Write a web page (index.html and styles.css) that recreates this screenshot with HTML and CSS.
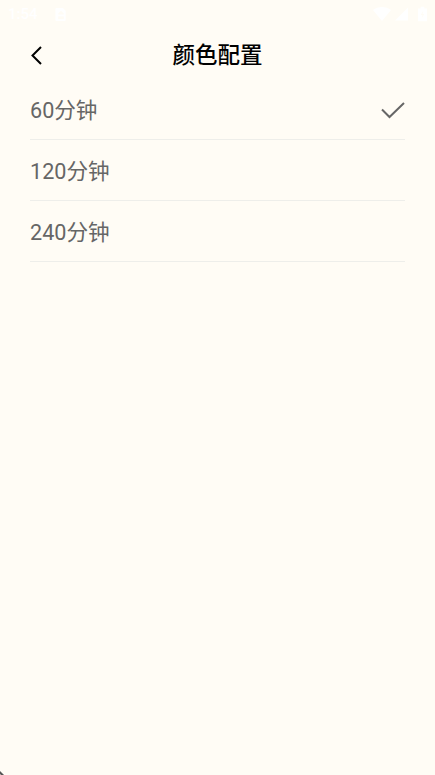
FILE: index.html
```html
<!DOCTYPE html>
<html lang="zh">
<head>
<meta charset="utf-8">
<title>颜色配置</title>
<link rel="stylesheet" href="styles.css">
</head>
<body>
<div class="page">
  <div class="status">
    <div class="status-left">
      <span class="time">1:54</span>
      <svg class="sim" width="12" height="13" viewBox="0 0 12 14"><path d="M1 0h7l3 3v10a1 1 0 0 1-1 1H1a1 1 0 0 1-1-1V1a1 1 0 0 1 1-1z" fill="#fff"/><path d="M6 3l3 3v1H3V6z" fill="#fffcf5"/><path d="M3 9h6v3H3z" fill="#fffcf5"/></svg>
    </div>
    <div class="status-right">
      <svg width="18" height="14" viewBox="0 0 18 14"><path d="M0 3C5-1 13-1 18 3l-9 11z" fill="#fff"/></svg>
      <svg width="13" height="14" viewBox="0 0 14 14"><path d="M0 14L14 0v14z" fill="#fff"/></svg>
      <svg class="battery" width="9" height="16" viewBox="0 0 10 16"><path d="M3 0h4v2h3v14H0V2h3z" fill="#fff"/><path d="M6 4L3 9h2l-1 4 3-5H5z" fill="#fffcf5"/></svg>
    </div>
  </div>
  <header class="header">
    <svg class="back" width="14" height="20" viewBox="0 0 14 20"><path d="M11 2L2.500 10.500l8.500 8.500" fill="none" stroke="#000" stroke-width="2"/></svg>
    <h1 class="title">颜色配置</h1>
  </header>
  <ul class="list">
    <li class="row"><span class="label">60分钟</span>
      <svg class="check" width="24" height="18" viewBox="0 0 24 18"><path d="M1 7.500L8.500 15L23 1" fill="none" stroke="#666" stroke-width="2"/></svg>
    </li>
    <li class="row"><span class="label">120分钟</span></li>
    <li class="row"><span class="label">240分钟</span></li>
  </ul>
  <svg class="corner" width="4" height="4" viewBox="0 0 4 4"><path d="M0 0l4 4H1L0 3z" fill="#555"/></svg>
</div>
</body>
</html>
```
FILE: styles.css
```css
* { box-sizing: border-box; }
html, body { margin: 0; padding: 0; }
body { background: #fffcf5; font-family: Roboto, "Noto Sans CJK SC", sans-serif; }
.page { position: relative; width: 435px; height: 775px; overflow: hidden; background: #fffcf5; }
.status { height: 24px; padding: 6px 8px 0 8px; display: flex; justify-content: space-between; align-items: flex-start; }
.status-left, .status-right { display: flex; align-items: center; gap: 4px; }
.status-left { gap: 17px; }
.battery { margin-left: 6px; }
.time { color: #fff; font-size: 15px; line-height: 16px; font-weight: 500; }
.header { position: relative; height: 55px; display: flex; align-items: center; justify-content: center; padding-top: 6px; }
.back { position: absolute; left: 30px; top: 21px; }
.title { margin: 0; font-size: 22.500px; font-weight: 500; color: #000; line-height: 30px; }
.list { list-style: none; margin: 0; padding: 0 30px; }
.row { height: 61px; display: flex; align-items: center; justify-content: space-between; border-bottom: 1px solid #eeeeea; color: #666; font-size: 21.600px; padding-top: 3px; }
.label { line-height: 28px; }
.corner { position: absolute; left: 0; bottom: 0; }
```
